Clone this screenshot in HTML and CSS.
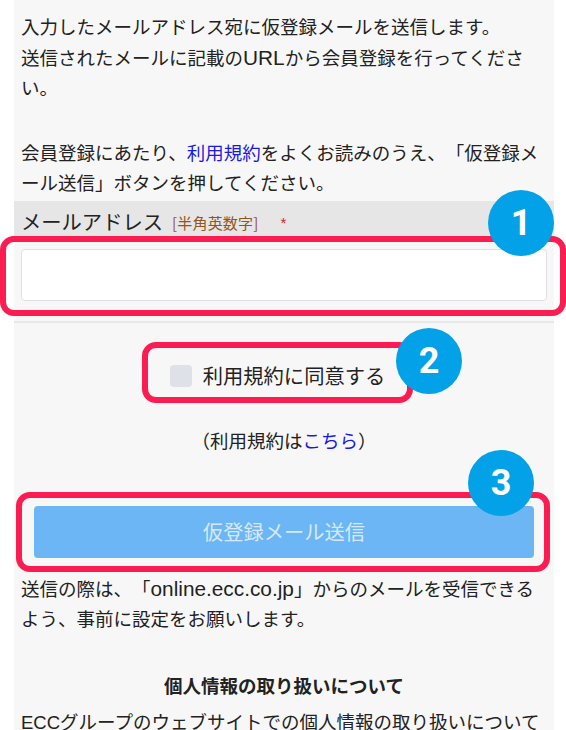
FILE: index.html
```html
<!DOCTYPE html>
<html lang="ja">
<head>
<meta charset="utf-8">
<title>仮登録</title>
<link rel="stylesheet" href="styles.css">
</head>
<body>
<main class="panel">
  <p class="intro">入力したメールアドレス宛に仮登録メールを送信します。<br>送信されたメールに記載の<span class="latin">URL</span>から会員登録を行ってください。</p>
  <p class="intro second">会員登録にあたり、<a href="#">利用規約</a>をよくお読みのうえ、「仮登録メール送信」ボタンを押してください。</p>
  <div class="label-bar"><span class="label">メールアドレス</span><span class="hint">[半角英数字]</span><span class="req">*</span></div>
  <div class="field"><input class="email" type="text" aria-label="メールアドレス"></div>
  <label class="agree"><span class="check"></span><span class="agree-text">利用規約に同意する</span></label>
  <p class="terms">（利用規約は<a href="#">こちら</a>）</p>
  <div class="submit-wrap"><button class="submit" type="button">仮登録メール送信</button></div>
  <p class="note">送信の際は、「<span class="latin">online.ecc.co.jp</span>」からのメールを受信できるよう、事前に設定をお願いします。</p>
  <h2 class="privacy">個人情報の取り扱いについて</h2>
  <p class="note last">ECCグループのウェブサイトでの個人情報の取り扱いについて</p>
</main>
<div class="ring ring1"></div>
<div class="ring ring2"></div>
<div class="ring ring3"></div>
<div class="badge badge1">1</div>
<div class="badge badge2">2</div>
<div class="badge badge3">3</div>
</body>
</html>
```
FILE: styles.css
```css
html, body { margin: 0; padding: 0; }
body {
  width: 566px;
  height: 730px;
  overflow: hidden;
  position: relative;
  background: #fff;
  font-family: "Liberation Sans", "Noto Sans CJK JP", sans-serif;
  color: #222;
  text-spacing-trim: space-all;
}
.panel {
  margin-left: 14px;
  width: 540px;
  height: 730px;
  overflow: hidden;
  background: #f7f7f7;
  font-size: 18.5px;
  line-height: 30.6px;
}
p { margin: 0; }
a { color: #1a1ae6; text-decoration: none; }
.latin { font-size: 20.8px; line-height: 1; }
.intro { padding: 13px 7px 0; }
.second { padding-top: 34px; }
.label-bar {
  box-sizing: border-box;
  height: 35px;
  margin-top: 1px;
  padding: 10px 0 0 7px;
  background: #e6e6e6;
  display: flex;
  align-items: center;
}
.label { font-size: 20.3px; color: #222; }
.hint { font-family: "Noto Sans CJK JP", sans-serif; font-size: 15px; letter-spacing: 0.2px; color: #94541c; margin-left: 9px; }
.req { font-size: 15px; color: #e02020; margin-left: 22px; }
.field {
  padding: 13px 7px 20px;
  border-bottom: 2px solid #e8e8e8;
}
.email {
  display: block;
  box-sizing: border-box;
  width: 526px;
  height: 52px;
  background: #fff;
  border: 1px solid #dde1e6;
  border-radius: 4px;
}
.agree {
  display: flex;
  align-items: center;
  justify-content: center;
  gap: 11px;
  margin-top: 37px;
  font-size: 20.3px;
  line-height: 30px;
  padding-right: 13px;
}
.agree-text { padding-top: 2px; }
.check {
  width: 22px;
  height: 22px;
  border-radius: 4px;
  background: #dee2e8;
}
.terms { text-align: center; margin-top: 35px; }
.submit-wrap { padding: 48px 20px 0; }
.submit {
  display: block;
  width: 500px;
  height: 52px;
  padding: 3px 0 0;
  border: 0;
  border-radius: 4px;
  background: #6cb6f5;
  color: #d6e9fb;
  font: inherit;
  font-size: 20.3px;
}
.note { padding: 17px 7px 0; }
.privacy { margin: 36px 0 0; font-size: 18.5px; line-height: 30px; text-align: center; font-weight: 700; }
.last { padding-top: 6px; }
.ring {
  position: absolute;
  box-sizing: border-box;
  border: 6px solid #fb1c52;
  border-radius: 14px;
}
.ring1 { left: 0; top: 236px; width: 566px; height: 80px; }
.ring2 { left: 142px; top: 342px; width: 271px; height: 61px; }
.ring3 { left: 16px; top: 492px; width: 534px; height: 80px; }
.badge {
  position: absolute;
  width: 66px;
  height: 66px;
  border-radius: 50%;
  background: #03a1e8;
  color: #fff;
  font-family: "Roboto", "Liberation Sans", sans-serif;
  font-weight: 700;
  font-size: 36px;
  line-height: 66px;
  text-align: center;
}
.badge1 { left: 488px; top: 190px; }
.badge2 { left: 396px; top: 328px; }
.badge3 { left: 468px; top: 450px; }
```
